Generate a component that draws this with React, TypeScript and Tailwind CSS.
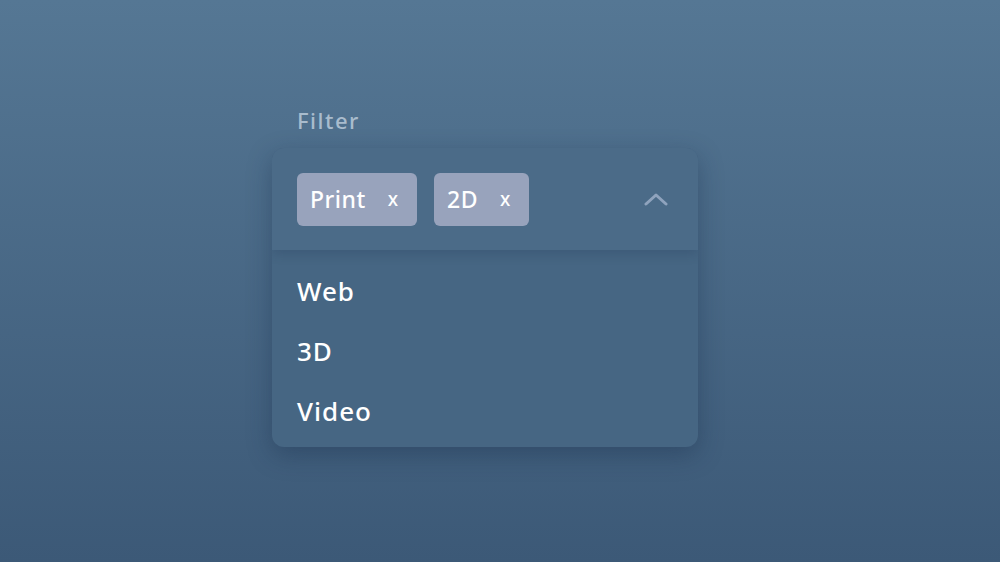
import React from "react";

function Chip({ label }: { label: string }) {
  return (
    <div className="flex h-[53px] items-center rounded-[6px] bg-[#98a3bc] pl-[13px] pr-[19px] text-white">
      <span className="text-[23px] font-medium leading-none tracking-[0.5px]">{label}</span>
      <span className="ml-[22px] text-[19px] font-medium leading-none">x</span>
    </div>
  );
}

export default function App() {
  return (
    <div
      className="flex h-[562px] w-full justify-center bg-gradient-to-b from-[#557794] to-[#3c5977] pt-[109px]"
      style={{ fontFamily: "'Noto Sans', 'Open Sans', sans-serif" }}
    >
      <div className="mr-[30px] w-[426px]">
        <div className="pl-[25px] text-[22px] font-medium leading-none tracking-[1.5px] text-[#a9bccd]">Filter</div>
        <div className="mt-[17px] overflow-hidden rounded-[12px] bg-[#466683] shadow-[0_8px_24px_rgba(20,40,70,0.35)]">
          <div className="relative flex h-[102px] items-center gap-[17px] bg-[#4b6b88] px-[25px] shadow-[0_4px_10px_rgba(30,50,80,0.22)]">
            <Chip label="Print" />
            <Chip label="2D" />
            <div className="ml-auto mr-[5px]">
              <svg width="24" height="14" viewBox="0 0 24 14" fill="none">
                <path d="M2 12 L12 3 L22 12" stroke="#8fa3bd" strokeWidth="3" strokeLinecap="round" strokeLinejoin="round" />
              </svg>
            </div>
          </div>
          <div className="flex flex-col px-[25px] pt-[11px] pb-[6px] text-[26px] font-medium tracking-[1px] text-white">
            <div className="flex h-[60px] items-center">Web</div>
            <div className="flex h-[60px] items-center">3D</div>
            <div className="flex h-[60px] items-center">Video</div>
          </div>
        </div>
      </div>
    </div>
  );
}
